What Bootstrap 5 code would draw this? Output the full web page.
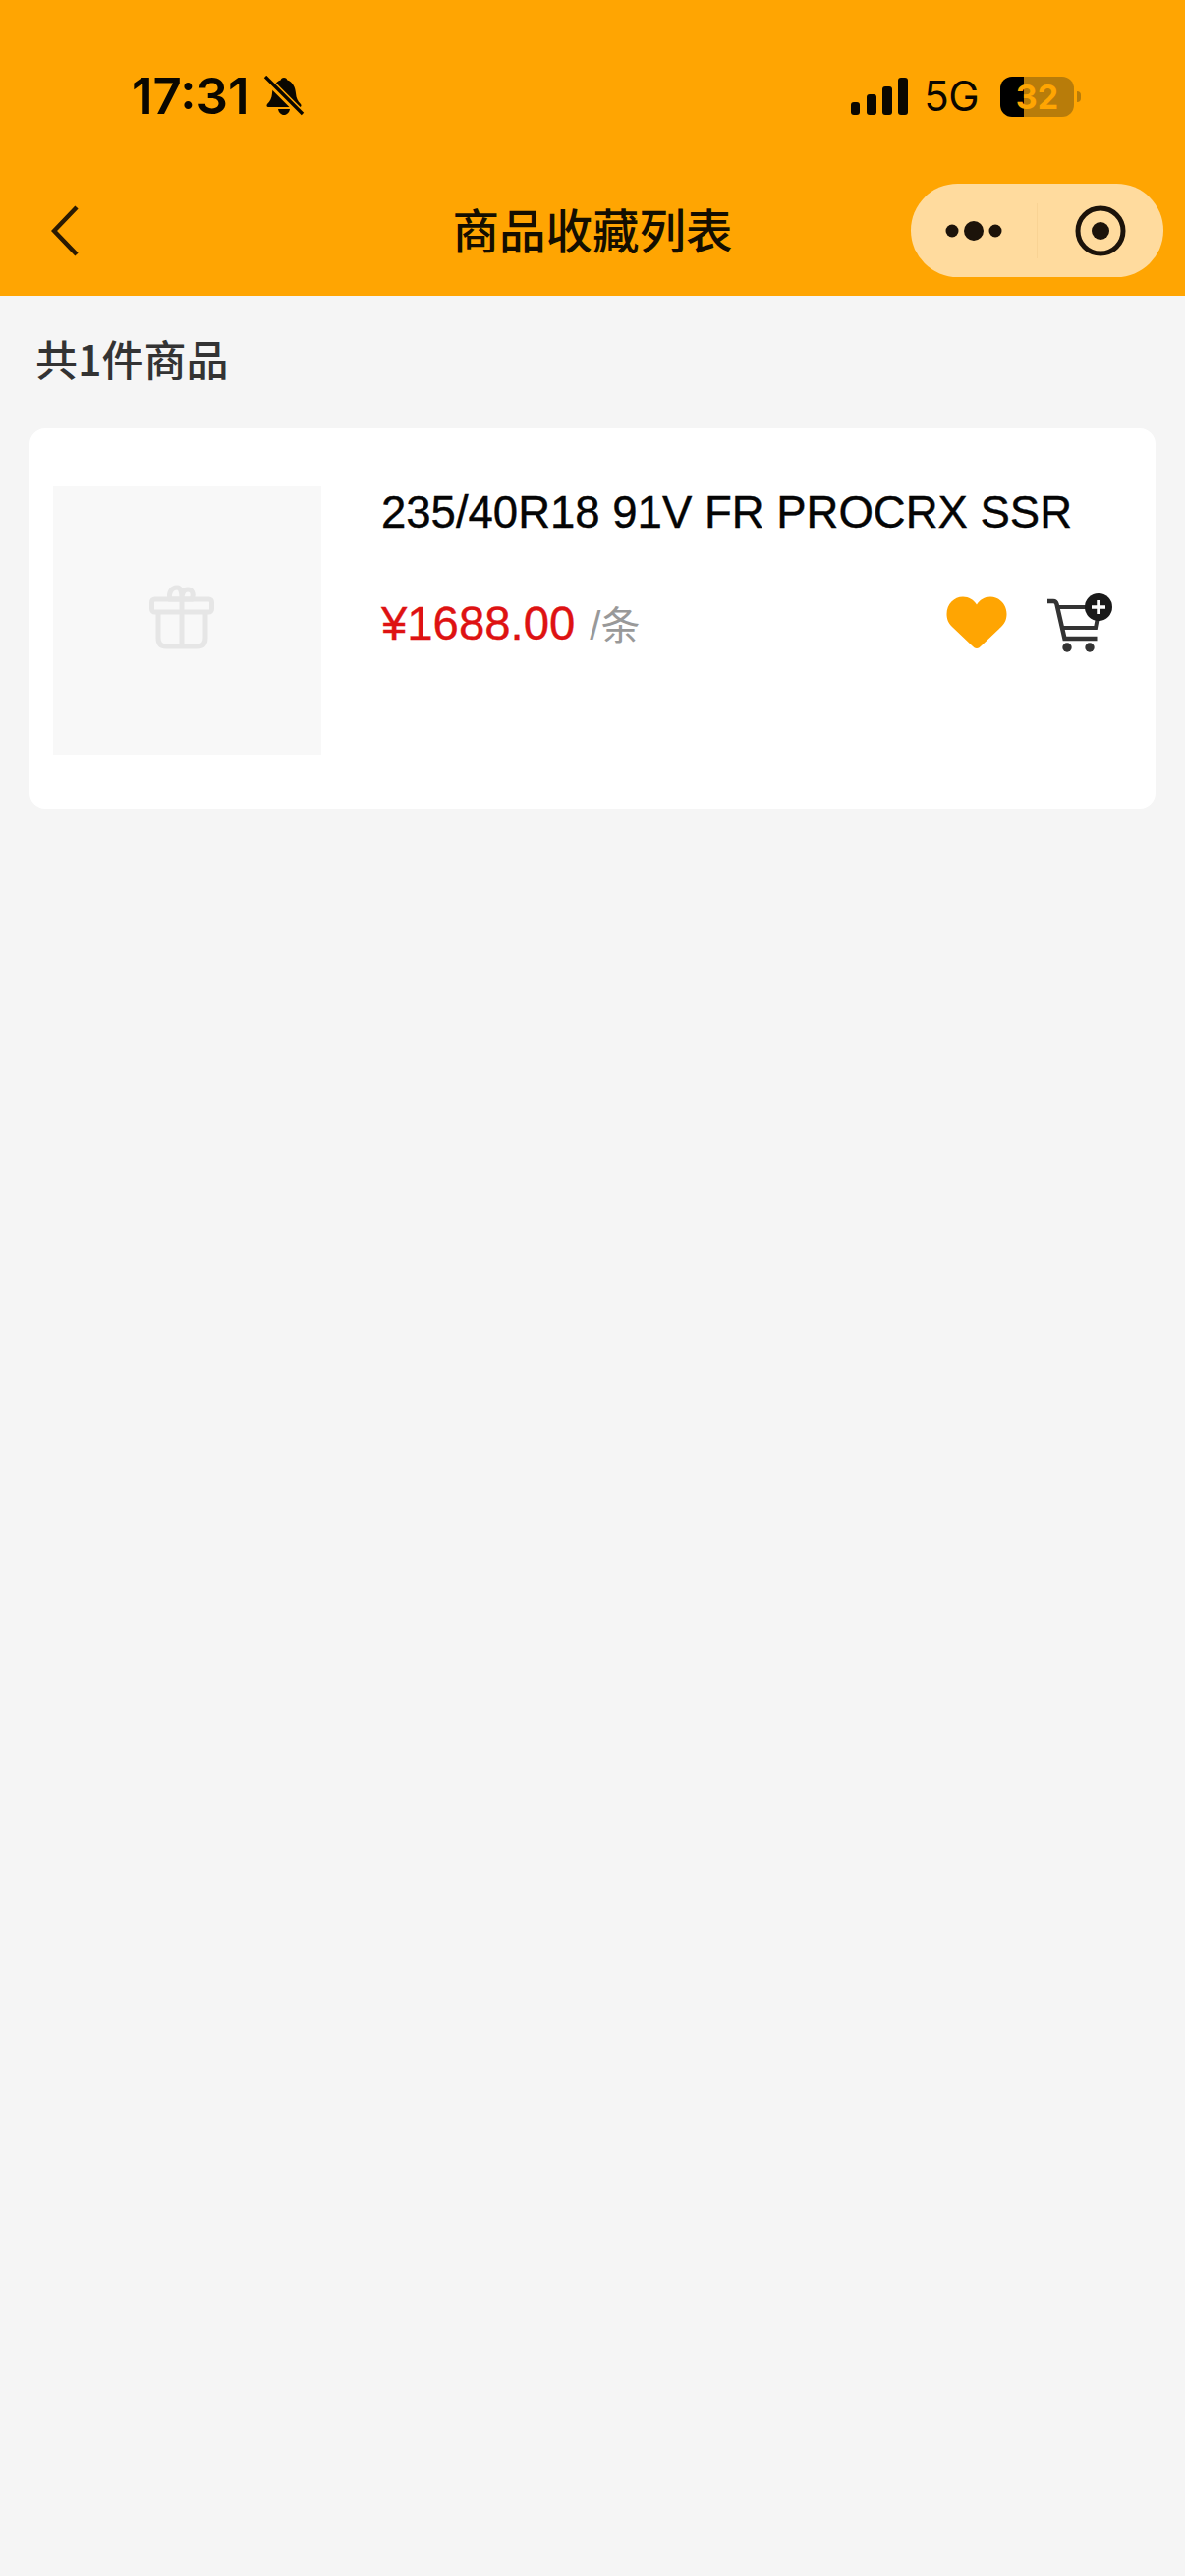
<!DOCTYPE html>
<html lang="zh-CN">
    <head>
        <meta charset="UTF-8">
        <title>商品收藏列表</title>
        <link href="https://cdn.jsdelivr.net/npm/bootstrap@5.3.0/dist/css/bootstrap.min.css" rel="stylesheet">
        <style>
            body { background: #f5f5f5; font-family: "Liberation Sans", "Noto Sans CJK SC", sans-serif; }
            .top-head { background: #ffa502; height: 301px; }
            .status-row { height: 187px; padding: 77px 106px 0 134px; align-items: flex-start; }
            .clock { font-family: Inter, sans-serif; font-weight: 600; font-size: 51px; line-height: 42px; color: #0a0700; }
            .bell-icon { margin-left: 14px; }
            .net-text { font-family: Inter, sans-serif; font-size: 42px; line-height: 42px; color: #0a0700; margin: 0 22px 0 16px; letter-spacing: -.5px; }
            .batt { width: 75px; height: 41px; border-radius: 12px; background: linear-gradient(90deg, #000 32%, #b87c0a 32%); color: #ffa502; font-family: Inter, sans-serif; font-weight: 700; font-size: 34px; line-height: 41px; }
            .batt-tip { width: 4px; height: 11px; background: #b87c0a; border-radius: 0 4px 4px 0; margin-left: 3px; }
            .nav-row { height: 114px; display: grid; grid-template-columns: 1fr auto 1fr; align-items: start; padding: 0 22px; }
            .back-icon { margin: 22px 0 0 30px; }
            .page-name { font-family: "Noto Sans CJK SC", sans-serif; font-weight: 500; font-size: 47.5px; line-height: 60px; color: #140e00; margin-top: 16px; }
            .capsule { width: 257px; height: 95px; border-radius: 48px; background: #ffdb9e; justify-self: end; }
            .capsule-part { flex: 1; height: 100%; }
            .capsule-line { width: 1px; height: 56px; background: #f9d394; }
            .count-line { font-family: "Noto Sans CJK SC", sans-serif; font-weight: 500; font-size: 43px; line-height: 56px; color: #333; padding: 35px 0 0 36px; height: 135px; }
            .goods-box { margin: 0 30px; height: 387px; background: #fff; border-radius: 16px; padding: 59px 44px 0 24px; }
            .goods-pic { width: 273px; height: 273px; background: #f8f8f8; padding-right: 12px; padding-bottom: 8px; }
            .goods-info { margin-left: 61px; }
            .goods-name { font-size: 45.5px; line-height: 54px; color: #050505; -webkit-text-stroke: .4px #050505; white-space: nowrap; }
            .goods-price-row { margin-top: 55px; }
            .price-num { font-size: 47.3px; line-height: 60px; color: #de1212; -webkit-text-stroke: .4px #de1212; }
            .price-unit { font-size: 40px; color: #999; margin-left: 15px; line-height: 60px; }
            .goods-btns { gap: 41px; margin-bottom: 4px; }
        </style>
    </head>
    <body>
        <div class="top-head">
            <div class="status-row d-flex justify-content-between">
                <div class="d-flex align-items-center">
                    <span class="clock">17:31</span>
                    <svg class="bell-icon" width="42" height="42" viewBox="0 0 42 42">
                        <path d="M21 2c2 0 3 1 3.400 2.600C30 6.400 32.500 12 33 18c.4 5 2 8 5 11 1 1 .6 3-1 3H5c-1.600 0-2-2-1-3 3-3 4.600-6 5-11 .5-6 3-11.600 8.600-13.400C18 3 19 2 21 2z" fill="#0a0700"/>
                        <path d="M15 34h12c-.6 3.600-3 6-6 6s-5.400-2.400-6-6z" fill="#0a0700"/>
                        <path d="M3 3l36 36" stroke="#ffa502" stroke-width="8"/>
                        <path d="M2 1l38 38" stroke="#0a0700" stroke-width="3.400"/>
                    </svg>
                </div>
                <div class="d-flex align-items-center">
                    <svg width="58" height="38" viewBox="0 0 58 38">
                        <rect x="0" y="25" width="9" height="13" rx="3" fill="#0a0700"/>
                        <rect x="16" y="17" width="10" height="21" rx="3" fill="#0a0700"/>
                        <rect x="32" y="9" width="10" height="29" rx="3" fill="#0a0700"/>
                        <rect x="48" y="0" width="10" height="38" rx="3" fill="#0a0700"/>
                    </svg>
                    <span class="net-text">5G</span>
                    <div class="batt d-flex justify-content-center">32</div>
                    <div class="batt-tip"></div>
                </div>
            </div>
            <div class="nav-row">
                <svg class="back-icon" width="28" height="52" viewBox="0 0 28 52">
                    <path d="M26 2L3 26l23 24" fill="none" stroke="#2a1a02" stroke-width="4.500"/>
                </svg>
                <div class="page-name">商品收藏列表</div>
                <div class="capsule d-flex align-items-center">
                    <div class="capsule-part d-flex align-items-center justify-content-center">
                        <svg width="58" height="24" viewBox="0 0 58 24">
                            <circle cx="7" cy="12" r="6.500" fill="#1c130a"/>
                            <circle cx="29" cy="12" r="10" fill="#1c130a"/>
                            <circle cx="51" cy="12" r="6.500" fill="#1c130a"/>
                        </svg>
                    </div>
                    <div class="capsule-line"></div>
                    <div class="capsule-part d-flex align-items-center justify-content-center">
                        <svg width="52" height="52" viewBox="0 0 52 52">
                            <circle cx="26" cy="26" r="23" fill="none" stroke="#1c130a" stroke-width="5"/>
                            <circle cx="26" cy="26" r="9" fill="#1c130a"/>
                        </svg>
                    </div>
                </div>
            </div>
        </div>

        <div class="count-line">共1件商品</div>

        <div class="goods-box d-flex">
            <div class="goods-pic flex-shrink-0 d-flex align-items-center justify-content-center">
                <svg width="66" height="66" viewBox="0 0 66 66" fill="none" stroke="#e6e6e6" stroke-width="5">
                    <rect x="2.500" y="15" width="61" height="13" rx="3"/>
                    <path d="M9 28v26c0 6 3 9 8 9h32c5 0 8-3 8-9V28"/>
                    <path d="M33 15v48"/>
                    <path d="M33 15H21c-2-7 2-12 7-12s5 6 5 12zM33 15h10c3-6 0-10-4-10s-6 4-6 10z"/>
                </svg>
            </div>
            <div class="goods-info flex-grow-1">
                <div class="goods-name">235/40R18 91V FR PROCRX SSR</div>
                <div class="goods-price-row d-flex justify-content-between align-items-center">
                    <div>
                        <span class="price-num">¥1688.00</span><span class="price-unit">/条</span>
                    </div>
                    <div class="goods-btns d-flex align-items-center">
                        <svg width="62" height="56" viewBox="0 0 62 56">
                            <path d="M31 54c-2 0-3-1-5-3L6 32C2 28 .5 24 .5 19 .5 9 8 1.500 17 1.500c6 0 11 3 14 8 3-5 8-8 14-8 9 0 16.500 7.500 16.500 17.500 0 5-1.500 9-5.500 13L36 51c-2 2-3 3-5 3z" fill="#ffa502"/>
                        </svg>
                        <svg width="66" height="60" viewBox="0 0 66 60">
                            <path d="M0 8h6c2 0 3 1 3.500 3l8 35h33" fill="none" stroke="#333" stroke-width="4.500"/>
                            <path d="M11 14h42l-4 21H15" fill="none" stroke="#333" stroke-width="4"/>
                            <circle cx="20" cy="55" r="4.700" fill="#333"/>
                            <circle cx="43" cy="55" r="4.700" fill="#333"/>
                            <circle cx="52" cy="14" r="14" fill="#1a1a1a"/>
                            <path d="M52 7v14M45 14h14" stroke="#fff" stroke-width="3.500"/>
                        </svg>
                    </div>
                </div>
            </div>
        </div>

        <script src="https://cdn.jsdelivr.net/npm/bootstrap@5.3.0/dist/js/bootstrap.bundle.min.js"></script>
    </body>
</html>
